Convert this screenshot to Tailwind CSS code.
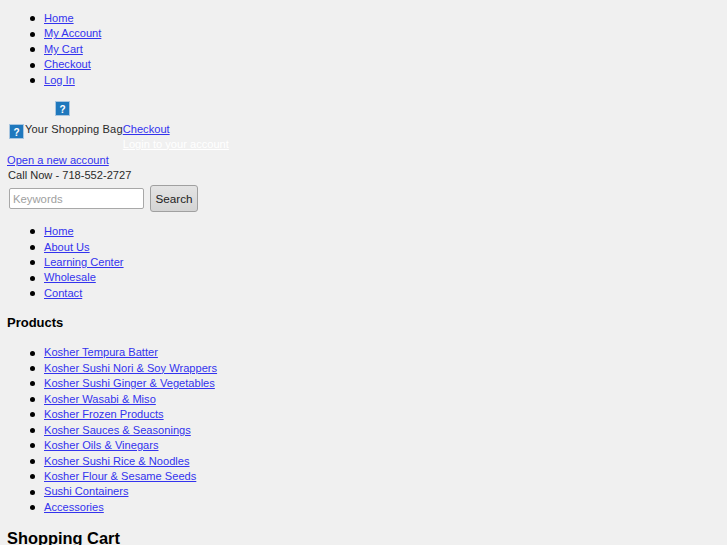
<!DOCTYPE html>
<html lang="en">
<head>
  <meta charset="UTF-8" />
  <title>Shopping Cart</title>
  <script src="https://cdn.jsdelivr.net/npm/@tailwindcss/browser@4"></script>
</head>
<body class="bg-[#f0f0f0] text-[#2a2a2a] font-['Liberation_Sans',Arial,sans-serif] text-[11.1px] leading-[15.45px] h-[545px] overflow-hidden">
  <div class="pl-[7px] pt-[11px]">
    <!-- top links -->
    <ul class="pl-[23px]">
      <li class="flex items-center gap-[9px]"><span class="w-[5px] h-[5px] rounded-full bg-black"></span><a href="#" class="text-[#3333ee] underline">Home</a></li>
      <li class="flex items-center gap-[9px]"><span class="w-[5px] h-[5px] rounded-full bg-black"></span><a href="#" class="text-[#3333ee] underline">My Account</a></li>
      <li class="flex items-center gap-[9px]"><span class="w-[5px] h-[5px] rounded-full bg-black"></span><a href="#" class="text-[#3333ee] underline">My Cart</a></li>
      <li class="flex items-center gap-[9px]"><span class="w-[5px] h-[5px] rounded-full bg-black"></span><a href="#" class="text-[#3333ee] underline">Checkout</a></li>
      <li class="flex items-center gap-[9px]"><span class="w-[5px] h-[5px] rounded-full bg-black"></span><a href="#" class="text-[#3333ee] underline">Log In</a></li>
    </ul>

    <div class="pl-[48px] mt-[13px] h-[15px]">
      <svg width="15" height="15" viewBox="0 0 15 15"><rect x="0.5" y="0.5" width="14" height="14" fill="#1f78bd" stroke="#a9c6e0"/><text x="7.5" y="11.5" text-anchor="middle" font-size="10" font-weight="700" fill="#fff" font-family="Liberation Sans">?</text></svg>
    </div>

    <!-- cart -->
    <div class="flex mt-[6px]">
      <div class="flex items-start pl-[2px]">
        <svg class="mt-[2px] mr-px" width="15" height="15" viewBox="0 0 15 15"><rect x="0.5" y="0.5" width="14" height="14" fill="#1f78bd" stroke="#a9c6e0"/><text x="7.5" y="11.5" text-anchor="middle" font-size="10" font-weight="700" fill="#fff" font-family="Liberation Sans">?</text></svg>
        <span class="tracking-[0.15px]">Your Shopping Bag</span>
      </div>
      <div>
        <a href="#" class="block text-[#3333ee] underline">Checkout</a>
        <a href="#" class="block -mt-px text-white underline">Login to your account</a>
      </div>
    </div>

    <a href="#" class="block mt-px text-[#3333ee] underline">Open a new account</a>
    <p class="pl-px -mt-px">Call Now - 718-552-2727</p>

    <!-- search -->
    <form class="flex items-start pl-[2px] mt-px h-[30px]">
      <input type="text" placeholder="Keywords" class="mt-[4px] w-[135px] h-[21px] px-[3px] bg-white border border-[#a8a8a8] rounded-[2px] text-[11.3px] placeholder:text-[#a0a0a0]" />
      <button type="button" class="mt-px ml-[6px] w-[48px] h-[27px] bg-linear-to-b from-[#e4e4e4] to-[#d4d4d4] border border-[#a0a0a0] rounded-[3px] text-[11.7px] text-[#222]">Search</button>
    </form>

    <ul class="pl-[23px] mt-[10px]">
      <li class="flex items-center gap-[9px]"><span class="w-[5px] h-[5px] rounded-full bg-black"></span><a href="#" class="text-[#3333ee] underline">Home</a></li>
      <li class="flex items-center gap-[9px]"><span class="w-[5px] h-[5px] rounded-full bg-black"></span><a href="#" class="text-[#3333ee] underline">About Us</a></li>
      <li class="flex items-center gap-[9px]"><span class="w-[5px] h-[5px] rounded-full bg-black"></span><a href="#" class="text-[#3333ee] underline">Learning Center</a></li>
      <li class="flex items-center gap-[9px]"><span class="w-[5px] h-[5px] rounded-full bg-black"></span><a href="#" class="text-[#3333ee] underline">Wholesale</a></li>
      <li class="flex items-center gap-[9px]"><span class="w-[5px] h-[5px] rounded-full bg-black"></span><a href="#" class="text-[#3333ee] underline">Contact</a></li>
    </ul>

    <h2 class="mt-[14px] font-bold text-[13px] leading-[15px] text-black">Products</h2>

    <ul class="pl-[23px] mt-[15px]">
      <li class="flex items-center gap-[9px]"><span class="w-[5px] h-[5px] rounded-full bg-black"></span><a href="#" class="text-[#3333ee] underline">Kosher Tempura Batter</a></li>
      <li class="flex items-center gap-[9px]"><span class="w-[5px] h-[5px] rounded-full bg-black"></span><a href="#" class="text-[#3333ee] underline">Kosher Sushi Nori &amp; Soy Wrappers</a></li>
      <li class="flex items-center gap-[9px]"><span class="w-[5px] h-[5px] rounded-full bg-black"></span><a href="#" class="text-[#3333ee] underline">Kosher Sushi Ginger &amp; Vegetables</a></li>
      <li class="flex items-center gap-[9px]"><span class="w-[5px] h-[5px] rounded-full bg-black"></span><a href="#" class="text-[#3333ee] underline">Kosher Wasabi &amp; Miso</a></li>
      <li class="flex items-center gap-[9px]"><span class="w-[5px] h-[5px] rounded-full bg-black"></span><a href="#" class="text-[#3333ee] underline">Kosher Frozen Products</a></li>
      <li class="flex items-center gap-[9px]"><span class="w-[5px] h-[5px] rounded-full bg-black"></span><a href="#" class="text-[#3333ee] underline">Kosher Sauces &amp; Seasonings</a></li>
      <li class="flex items-center gap-[9px]"><span class="w-[5px] h-[5px] rounded-full bg-black"></span><a href="#" class="text-[#3333ee] underline">Kosher Oils &amp; Vinegars</a></li>
      <li class="flex items-center gap-[9px]"><span class="w-[5px] h-[5px] rounded-full bg-black"></span><a href="#" class="text-[#3333ee] underline">Kosher Sushi Rice &amp; Noodles</a></li>
      <li class="flex items-center gap-[9px]"><span class="w-[5px] h-[5px] rounded-full bg-black"></span><a href="#" class="text-[#3333ee] underline">Kosher Flour &amp; Sesame Seeds</a></li>
      <li class="flex items-center gap-[9px]"><span class="w-[5px] h-[5px] rounded-full bg-black"></span><a href="#" class="text-[#3333ee] underline">Sushi Containers</a></li>
      <li class="flex items-center gap-[9px]"><span class="w-[5px] h-[5px] rounded-full bg-black"></span><a href="#" class="text-[#3333ee] underline">Accessories</a></li>
    </ul>

    <h1 class="mt-[13px] font-bold text-[16.4px] leading-[20px] text-black">Shopping Cart</h1>
  </div>
</body>
</html>
